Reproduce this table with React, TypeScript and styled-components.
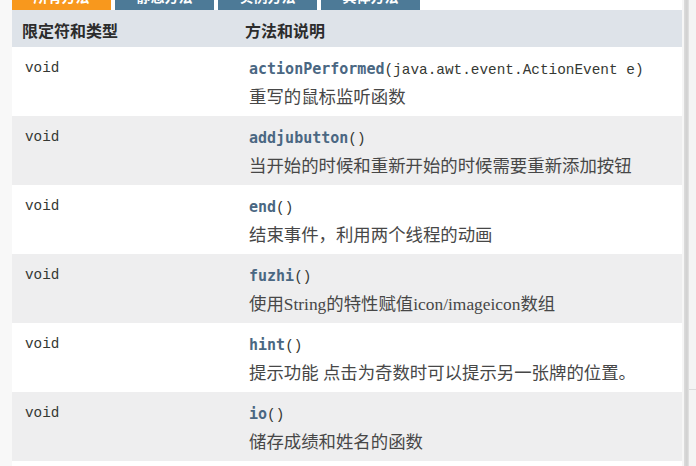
import React from 'react';
import styled, { createGlobalStyle } from 'styled-components';

const GlobalStyle = createGlobalStyle`
  html, body {
    margin: 0;
    padding: 0;
    background: #ffffff;
    overflow: hidden;
  }
`;

type Method = {
    name: string;
    args: string;
    desc: string;
};

const methods: Method[] = [
    { name: 'actionPerformed', args: '(java.awt.event.ActionEvent e)', desc: '重写的鼠标监听函数' },
    { name: 'addjubutton', args: '()', desc: '当开始的时候和重新开始的时候需要重新添加按钮' },
    { name: 'end', args: '()', desc: '结束事件，利用两个线程的动画' },
    { name: 'fuzhi', args: '()', desc: '使用String的特性赋值icon/imageicon数组' },
    { name: 'hint', args: '()', desc: '提示功能 点击为奇数时可以提示另一张牌的位置。' },
    { name: 'io', args: '()', desc: '储存成绩和姓名的函数' },
];

const tabs = ['所有方法', '静态方法', '实例方法', '具体方法'];

export default function App() {
    return (
        <Page>
            <GlobalStyle />
            <Gutter />
            <Main>
                <TabBar>
                    {tabs.map((t, i) => (
                        <Tab key={t} active={i === 0}>{t}</Tab>
                    ))}
                </TabBar>
                <Header>
                    <TypeCol>限定符和类型</TypeCol>
                    <MethodHeadCol>方法和说明</MethodHeadCol>
                </Header>
                {methods.map((m, i) => (
                    <Row key={m.name} alt={i % 2 === 1}>
                        <TypeCell>void</TypeCell>
                        <MethodCell>
                            <Signature>
                                <MethodName>{m.name}</MethodName>
                                <Args>{m.args}</Args>
                            </Signature>
                            <Desc>{m.desc}</Desc>
                        </MethodCell>
                    </Row>
                ))}
            </Main>
            <Shadow />
            <Scroller>
                <ScrollTrack />
            </Scroller>
        </Page>
    );
}

const Page = styled.div`
    display: flex;
    width: 696px;
    height: 466px;
    overflow: hidden;
    background: #ffffff;
`;

const Gutter = styled.div`
    width: 12px;
    flex-shrink: 0;
    background: #f8f8f8;
`;

const Main = styled.div`
    flex: 1;
    display: flex;
    flex-direction: column;
    min-width: 0;
`;

const TabBar = styled.div`
    display: flex;
    gap: 4px;
    height: 10px;
    overflow: hidden;
    align-items: flex-end;
`;

const Tab = styled.div<{ active?: boolean }>`
    width: 99px;
    height: 30px;
    flex-shrink: 0;
    box-sizing: border-box;
    padding-top: 9px;
    text-align: center;
    font-family: "DejaVu Sans", "Noto Sans CJK SC", sans-serif;
    font-size: 14px;
    font-weight: bold;
    line-height: 16px;
    color: #ffffff;
    background: ${(p) => (p.active ? '#f8981d' : '#4d7a97')};
`;

const Header = styled.div`
    display: flex;
    height: 37px;
    box-sizing: border-box;
    padding-top: 12px;
    background: #dee3e9;
    font-family: "DejaVu Sans", "Noto Sans CJK SC", sans-serif;
    font-size: 16px;
    font-weight: bold;
    line-height: 19px;
    color: #2c2c2c;
`;

const TypeCol = styled.div`
    width: 223px;
    padding-left: 10px;
    flex-shrink: 0;
`;

const MethodHeadCol = styled.div`
    flex: 1;
`;

const Row = styled.div<{ alt?: boolean }>`
    display: flex;
    height: 69px;
    box-sizing: border-box;
    padding-top: 8px;
    background: ${(p) => (p.alt ? '#eeeeef' : '#ffffff')};
`;

const TypeCell = styled.div`
    width: 224px;
    padding-left: 13px;
    flex-shrink: 0;
    font-family: "Liberation Mono", monospace;
    font-size: 14.3px;
    line-height: 27px;
    color: #353833;
`;

const MethodCell = styled.div`
    flex: 1;
    display: flex;
    flex-direction: column;
`;

const Signature = styled.div`
    line-height: 27px;
    white-space: nowrap;
`;

const MethodName = styled.span`
    font-family: "DejaVu Sans Mono", monospace;
    font-size: 15px;
    font-weight: bold;
    color: #4a6782;
`;

const Args = styled.span`
    font-family: "Liberation Mono", monospace;
    font-size: 14.4px;
    color: #353833;
`;

const Desc = styled.div`
    font-family: "Liberation Serif", "Noto Sans CJK SC", serif;
    font-size: 17.4px;
    line-height: 27px;
    color: #474747;
    white-space: nowrap;
`;

const Shadow = styled.div`
    width: 7px;
    flex-shrink: 0;
    background: linear-gradient(to right, #f6f6f6 0, #f6f6f6 2px, #dcdcdc 2px, #d0d0d0 5px, #e4e4e4 7px);
`;

const Scroller = styled.div`
    width: 7px;
    flex-shrink: 0;
    background: #f4f4f4;
`;

const ScrollTrack = styled.div`
    height: 389px;
    border-bottom: 1px solid #dcdcdc;
`;
